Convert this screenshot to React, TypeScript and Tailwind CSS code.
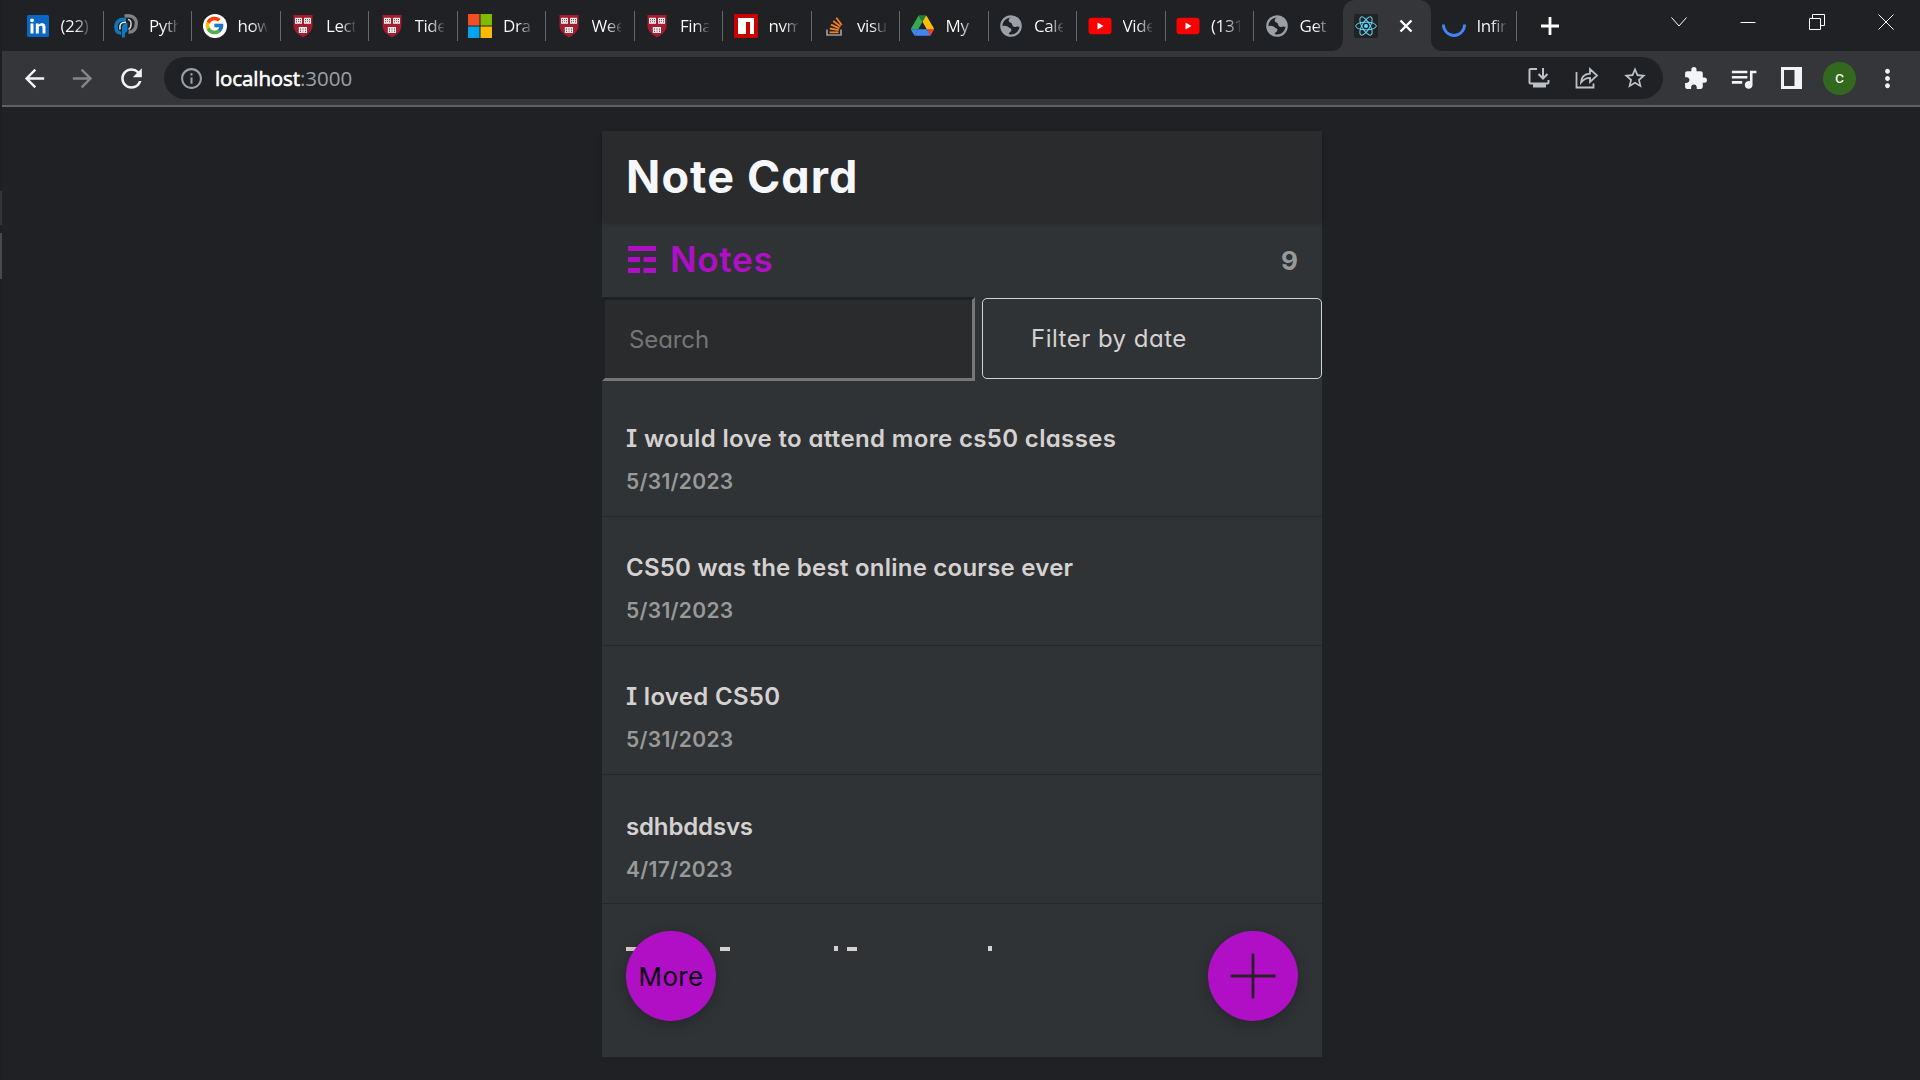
import React from "react";
import { FcGoogle } from "react-icons/fc";
import {
  MdArrowBack,
  MdArrowForward,
  MdRefresh,
  MdInfoOutline,
  MdStarBorder,
  MdExtension,
  MdQueueMusic,
  MdMoreVert,
  MdPublic,
} from "react-icons/md";

const LinkedIn = () => (
  <svg width="24" height="24" viewBox="0 0 24 24">
    <rect x="1" y="1" width="22" height="22" rx="1.5" fill="#0a66c2" />
    <circle cx="6" cy="6.3" r="1.9" fill="#fff" />
    <rect x="4.5" y="9.5" width="3" height="10" fill="#fff" />
    <path d="M9.8 9.5h2.9v1.4c.6-1 1.700-1.700 3.200-1.700 2.900 0 3.600 1.900 3.600 4.500v5.800h-3v-5.200c0-1.300-.1-2.600-1.700-2.600s-2 1.200-2 2.600v5.200h-3z" fill="#fff" />
  </svg>
);

const PythonTutor = () => (
  <svg width="24" height="24" viewBox="0 0 24 24" fill="none">
    <path d="M10.500 2.200C18 .5 22.300 4 22.300 9.500S19 18.500 14.500 18" stroke="#808085" strokeWidth="3.400" />
    <path d="M14 5.500c4 .5 4 7.500.5 10" stroke="#d0d0d3" strokeWidth="1.500" />
    <path d="M12 5.500C5 4.500 2 8.500 2 13s2.500 6 5 6" stroke="#0b78c0" strokeWidth="3.600" />
    <path d="M12 8.200c-5-.5-7 2.500-6 7.300" stroke="#e4eef5" strokeWidth="1.500" />
    <path d="M8 23.500V14c0-3 1.500-5 5.500-5v6.500c0 2-1 3-2.500 3.200v4.800z" fill="#0b78c0" />
  </svg>
);

const Google = () => (
  <span className="flex size-6 items-center justify-center rounded-full bg-white">
    <FcGoogle size={21} />
  </span>
);

const Shield = () => (
  <svg width="24" height="24" viewBox="0 0 24 24">
    <path d="M2.500 1h19v10.500c0 5.500-4.500 9-9.500 12-5-3-9.500-6.500-9.500-12z" fill="#a51c30" />
    <g fill="#efe9ea">
      <rect x="4" y="3.800" width="7" height="6" />
      <rect x="13" y="3.800" width="7" height="6" />
      <rect x="7.800" y="13" width="8.200" height="6" />
    </g>
    <g stroke="#5d5054" strokeWidth="1">
      <path d="M5.500 5v3.500M7.500 5v3M9.500 5v3.500M14.500 5v3.500M16.500 5v3M18.500 5v3.500M9.500 14.500V18M12 14.500v3M14.500 14.500V18" strokeDasharray="1.200 1" />
    </g>
  </svg>
);

const Microsoft = () => (
  <svg width="24" height="24" viewBox="0 0 24 24">
    <rect width="11.500" height="11.500" fill="#f25022" />
    <rect x="12.500" width="11.500" height="11.500" fill="#7fba00" />
    <rect y="12.500" width="11.500" height="11.500" fill="#00a4ef" />
    <rect x="12.500" y="12.500" width="11.500" height="11.500" fill="#ffb900" />
  </svg>
);

const Npm = () => (
  <svg width="24" height="24" viewBox="0 0 24 24">
    <rect width="24" height="24" fill="#cb0000" />
    <path d="M4 4h16v16h-4V8h-4v12H4z" fill="#fff" />
  </svg>
);

const StackOverflow = () => (
  <svg width="24" height="24" viewBox="0 0 24 24" fill="none">
    <path d="M5 15.500v5.500h14v-5.500" stroke="#9a9ca0" strokeWidth="1.700" />
    <g stroke="#f48024" strokeWidth="1.800">
      <path d="M7.500 18.300h9" />
      <path d="M7.800 14.500l8.900 1.600" />
      <path d="M9 10.700l8.400 3.600" />
      <path d="M11.200 7l7.300 5.500" />
      <path d="M14.300 3.800l5.400 7.200" />
    </g>
  </svg>
);

const Drive = () => (
  <svg width="23" height="21" viewBox="0 0 87.300 78">
    <path d="m6.600 66.850 3.850 6.650c.8 1.400 1.950 2.500 3.300 3.300l13.750-23.800h-27.500c0 1.550.4 3.100 1.200 4.500z" fill="#4285f4" />
    <path d="m43.650 25-13.750-23.800c-1.350.8-2.500 1.900-3.300 3.300l-25.400 44a9.060 9.060 0 0 0-1.200 4.500h27.500z" fill="#34a853" />
    <path d="m73.550 76.800c1.350-.8 2.500-1.900 3.300-3.300l1.600-2.750 7.650-13.250c.8-1.400 1.200-2.950 1.200-4.500h-27.500l5.850 11.500z" fill="#ea4335" />
    <path d="m43.650 25 13.750-23.800c-1.350-.8-2.900-1.200-4.500-1.200h-18.500c-1.600 0-3.150.45-4.500 1.200z" fill="#188038" />
    <path d="m59.800 53h-32.300l-13.750 23.800c1.350.8 2.900 1.200 4.500 1.200h50.800c1.600 0 3.150-.45 4.500-1.200z" fill="#4285f4" />
    <path d="m73.400 26.500-12.700-22c-.8-1.400-1.950-2.500-3.300-3.300l-13.750 23.800 16.150 28h27.450c0-1.550-.4-3.100-1.200-4.500z" fill="#fbbc04" />
  </svg>
);

const Globe = () => (
  <svg width="24" height="24" viewBox="0 0 24 24" fill="none">
    <circle cx="12" cy="12" r="9.700" stroke="#9aa0a6" strokeWidth="2.200" />
    <path d="M2.500 12.500c3-1.500 6-.5 8 1.500 2.200.5 2.500 2 1.300 3.500-1.500.8-2.300 1.700-2.300 4C5 20.500 2.500 17 2.500 12.500z" fill="#9aa0a6" />
    <path d="M13 2.500c-1.500 1.200-3.500 2-3.300 4 .2 2.500 3 1.500 3.300 3.500.3 2.500 2 3.500 4.500 2.700 1.500-.3 2.500.3 4 .3.5-5-3-10-8.500-10.500z" fill="#9aa0a6" />
  </svg>
);

const YouTube = () => (
  <svg width="24" height="24" viewBox="0 0 24 24">
    <rect x="0.500" y="3.800" width="23" height="16.400" rx="3.200" fill="#f00" />
    <path d="M9.500 8.500v7l6-3.500z" fill="#fff" />
  </svg>
);

const ReactLogo = () => (
  <svg width="24" height="24" viewBox="0 0 24 24" fill="none">
    <rect width="24" height="24" rx="2" fill="#222" />
    <g stroke="#61dafb" strokeWidth="1">
      <ellipse cx="12" cy="12" rx="10.300" ry="3.900" />
      <ellipse cx="12" cy="12" rx="10.300" ry="3.900" transform="rotate(60 12 12)" />
      <ellipse cx="12" cy="12" rx="10.300" ry="3.900" transform="rotate(120 12 12)" />
    </g>
    <circle cx="12" cy="12" r="2" fill="#61dafb" />
  </svg>
);

const Spinner = () => (
  <svg width="24" height="24" viewBox="0 0 24 24" fill="none">
    <path d="M1.400 10.500a10.600 11 0 1 0 21.200 0" stroke="#4285f4" strokeWidth="2.800" />
  </svg>
);

const tabs: { icon: React.ReactNode; title: string }[] = [
  { icon: <LinkedIn />, title: "(22)" },
  { icon: <PythonTutor />, title: "Pyth" },
  { icon: <Google />, title: "how" },
  { icon: <Shield />, title: "Lect" },
  { icon: <Shield />, title: "Tide" },
  { icon: <Microsoft />, title: "Dra" },
  { icon: <Shield />, title: "Wee" },
  { icon: <Shield />, title: "Fina" },
  { icon: <Npm />, title: "nvm" },
  { icon: <StackOverflow />, title: "visu" },
  { icon: <Drive />, title: "My" },
  { icon: <Globe />, title: "Cale" },
  { icon: <YouTube />, title: "Vide" },
  { icon: <YouTube />, title: "(131" },
  { icon: <Globe />, title: "Get" },
];

const Tab = ({ icon, title, divider = true }: { icon: React.ReactNode; title: string; divider?: boolean }) => (
  <div className="flex h-[51px] w-full items-center pl-[10.500px]">
    <span className="flex size-6 shrink-0 items-center justify-center">{icon}</span>
    <span className="ml-[11px] h-6 w-[29px] overflow-hidden bg-[linear-gradient(90deg,#fff_50%,#ffffff20_100%)] bg-clip-text text-[17px] leading-6 tracking-[-0.400px] whitespace-nowrap text-transparent">
      {title}
    </span>
    <span className={divider ? "ml-auto h-[30px] w-px shrink-0 bg-[#65666a]" : "hidden"} />
  </div>
);

const TabStrip = () => (
  <div className="flex h-[51px] shrink-0 pl-[15px]">
    {tabs.map((t, i) => (
      <div key={i} className="w-[88.5px] shrink-0">
        <Tab icon={t.icon} title={t.title} divider={i < tabs.length - 1} />
      </div>
    ))}
    <div className="relative flex h-[51px] w-[88.5px] shrink-0 items-center rounded-t-[12px] bg-[#35363a] pl-[11px]">
      <svg className="absolute bottom-0 -left-[11px]" width="11" height="11">
        <path d="M11 0v11H0A11 11 0 0 0 11 0z" fill="#35363a" />
      </svg>
      <svg className="absolute -right-[11px] bottom-0" width="11" height="11">
        <path d="M0 0v11h11A11 11 0 0 1 0 0z" fill="#35363a" />
      </svg>
      <ReactLogo />
      <svg className="ml-[21px]" width="14" height="14" viewBox="0 0 14 14" stroke="#fff" strokeWidth="2.400">
        <path d="M1.500 1.500l11 11M12.500 1.500l-11 11" />
      </svg>
    </div>
    <div className="w-[86px] shrink-0">
      <Tab icon={<Spinner />} title="Infin" />
    </div>
    <div className="flex h-[51px] flex-1 items-center">
      <svg className="ml-[23.500px]" width="18" height="18" viewBox="0 0 18 18" stroke="#fff" strokeWidth="2.800">
        <path d="M9 0v18M0 9h18" />
      </svg>
      <div className="mb-2 ml-auto flex items-center gap-[53px] pr-[26px]">
        <svg width="16" height="16" fill="none" stroke="#fff">
          <path d="M0.500 3.500l7.500 8.500 7.500-8.500" />
        </svg>
        <svg width="16" height="16" stroke="#fff">
          <path d="M0.500 8.500h15" />
        </svg>
        <svg width="16" height="16" fill="none" stroke="#fff">
          <path d="M0.500 4.500h11v11h-11zM3.500 4.500v-4h12v11h-4" />
        </svg>
        <svg width="16" height="16" stroke="#fff">
          <path d="M0.500 0.500l15 15M15.500 0.500l-15 15" />
        </svg>
      </div>
    </div>
  </div>
);

const Toolbar = () => (
  <div className="flex h-[56px] shrink-0 items-center border-b-2 border-[#606165] bg-[#35363a] pl-[20px]">
    <MdArrowBack size={29} color="#f1f3f4" />
    <MdArrowForward size={29} color="#85868a" className="ml-[19px]" />
    <MdRefresh size={31} color="#f1f3f4" className="ml-[18.500px]" />
    <div className="ml-[17.500px] flex h-[42px] w-[1499px] items-center rounded-full bg-[#202124] pl-[15px]">
      <MdInfoOutline size={25} color="#9aa0a6" />
      <span className="ml-[11px] flex text-[20.500px] leading-none text-[#9aa0a6]">
        <span className="tracking-[-0.100px] text-white [-webkit-text-stroke:0.600px_white]">localhost</span>
        <span>:3000</span>
      </span>
      <div className="ml-auto flex items-center pr-[15px]">
        <svg width="24" height="24" viewBox="0 0 24 24" fill="none" stroke="#bdc1c6" strokeWidth="2">
          <path d="M10 3H3.500a1 1 0 0 0-1 1v12.500a1 1 0 0 0 1 1h17a1 1 0 0 0 1-1V14M16 2v10M11.500 8l4.500 4.500L20.500 8" />
          <path d="M6 19.500h13" strokeWidth="4" />
        </svg>
        <svg className="ml-[24px]" width="24" height="24" viewBox="0 0 24 24" fill="none" stroke="#bdc1c6" strokeWidth="1.800">
          <path d="M1.500 6v15.500h17v-4M6 16.500c.3-6 3.500-8.500 9-8.800V3l7 6.500-7 6.500v-4.200c-4 0-6.500 1.500-9 4.700z" />
        </svg>
        <MdStarBorder size={26} color="#bdc1c6" className="ml-[23px]" />
      </div>
    </div>
    <MdExtension size={25} color="#f1f3f4" className="ml-[20px]" />
    <MdQueueMusic size={31} color="#f1f3f4" className="ml-[20px]" />
    <svg className="ml-[22px]" width="21" height="22" viewBox="0 0 21 22">
      <path fillRule="evenodd" d="M0 0h21v22H0zM3 3v16h10.500V3z" fill="#f1f3f4" />
    </svg>
    <div className="ml-[21px] flex size-[33px] items-center justify-center rounded-full bg-[#33691e] pb-px font-[Roboto] text-[17px] text-white">
      c
    </div>
    <MdMoreVert size={29} color="#f1f3f4" className="ml-[17px]" />
  </div>
);

const notes = [
  { title: "I would love to attend more cs50 classes", date: "5/31/2023", tracking: "tracking-[0.350px]" },
  { title: "CS50 was the best online course ever", date: "5/31/2023", tracking: "tracking-[0.240px]" },
  { title: "I loved CS50", date: "5/31/2023", tracking: "tracking-[0.300px]" },
  { title: "sdhbddsvs", date: "4/17/2023", tracking: "tracking-[-0.150px]" },
];

const Note = ({ title, date, tracking }: { title: string; date: string; tracking: string }) => (
  <div className="flex h-[129.200px] shrink-0 flex-col border-b border-[#25282a] pt-[36.500px] pl-6">
    <span className={`text-[24px] leading-[30px] font-semibold text-[#d6d1d1] ${tracking}`}>{title}</span>
    <span className="mt-[15px] text-[21px] leading-[26px] font-semibold tracking-[0.300px] text-[#999]">{date}</span>
  </div>
);

const NoteCard = () => (
  <main className="relative mt-[24px] ml-[602px] flex h-[926px] w-[720px] flex-col bg-[#2f3335] font-[Inter,sans-serif] [font-feature-settings:'cv11','cv08']">
    <h1 className="z-10 flex h-[91px] shrink-0 items-center bg-[#2a2b2c] pl-6 text-[45px] font-bold tracking-[1.100px] text-[#f5f7fa] shadow-[0_1px_4px_rgba(0,0,0,0.25)]">
      Note Card
    </h1>
    <div className="flex h-[75px] shrink-0 items-center justify-between pr-[24px] pl-[26px]">
      <div className="flex items-center gap-[14px]">
        <svg width="28" height="27" fill="#b00fc6">
          <path d="M0 0h28v5H0zM0 11h12v5H0zM15.500 11H28v5H15.500zM0 22h12v5H0zM15.500 22H28v5H15.500z" />
        </svg>
        <h2 className="text-[35px] font-semibold tracking-[0.700px] text-[#b00fc6]">Notes</h2>
      </div>
      <span className="pt-px text-[26px] font-bold text-[#999]">9</span>
    </div>
    <div className="flex h-[84px] shrink-0">
      <div className="flex h-[84px] w-[373px] items-center border-3 border-t-[#202122] border-r-[#767676] border-b-[#767676] border-l-[#202122] bg-[#2a2b2c] pt-[2px] pl-6 text-[24px] tracking-[-0.100px] text-[#757575]">
        Search
      </div>
      <button className="mt-px ml-[7px] flex h-[81px] w-[340px] items-center rounded-[5px] border border-[#d6d1d1] pl-[48px] text-[24px] tracking-[0.480px] text-[#d6d1d1]">
        Filter by date
      </button>
    </div>
    <div className="mt-[6.500px] flex h-[563.5px] shrink-0 flex-col overflow-hidden">
      {notes.map((n) => (
        <Note key={n.title} {...n} />
      ))}
      <div className="flex items-end pt-[42px] pl-6">
        <span className="h-1 w-3 bg-[#d6d1d1]" />
        <span className="ml-[82px] h-1 w-2.5 bg-[#d6d1d1]" />
        <span className="ml-[104px] h-[5px] w-1 bg-[#d6d1d1]" />
        <span className="ml-[9px] h-1 w-2.5 bg-[#d6d1d1]" />
        <span className="ml-[131px] h-[5px] w-1 bg-[#d6d1d1]" />
      </div>
    </div>
    <button className="absolute bottom-[36px] left-[24px] flex size-[90px] items-center justify-center rounded-full bg-[#b00fc6] text-[26px] tracking-[0.300px] text-[#0b0010] shadow-[0_3px_14px_rgba(0,0,0,0.25)]">
      More
    </button>
    <button className="absolute right-[24px] bottom-[36px] flex size-[90px] items-center justify-center rounded-full bg-[#b00fc6] shadow-[0_3px_14px_rgba(0,0,0,0.25)]">
      <svg width="46" height="46" viewBox="0 0 46 46" stroke="#27202b" strokeWidth="2.800">
        <path d="M23 0.500v45M0.500 23h45" />
      </svg>
    </button>
  </main>
);

export default function App() {
  return (
    <div className="flex h-[1080px] w-[1920px] overflow-hidden bg-[#202124] font-['Open_Sans',sans-serif]">
      <div className="z-10 flex w-[2px] shrink-0 flex-col bg-[#1e1f1e]">
        <span className="mt-[191px] h-[34px] bg-[#343534]" />
        <span className="mt-[8px] h-[46px] bg-[#484948]" />
      </div>
      <div className="-ml-[2px] flex w-[1920px] shrink-0 flex-col">
        <TabStrip />
        <Toolbar />
        <NoteCard />
      </div>
    </div>
  );
}
